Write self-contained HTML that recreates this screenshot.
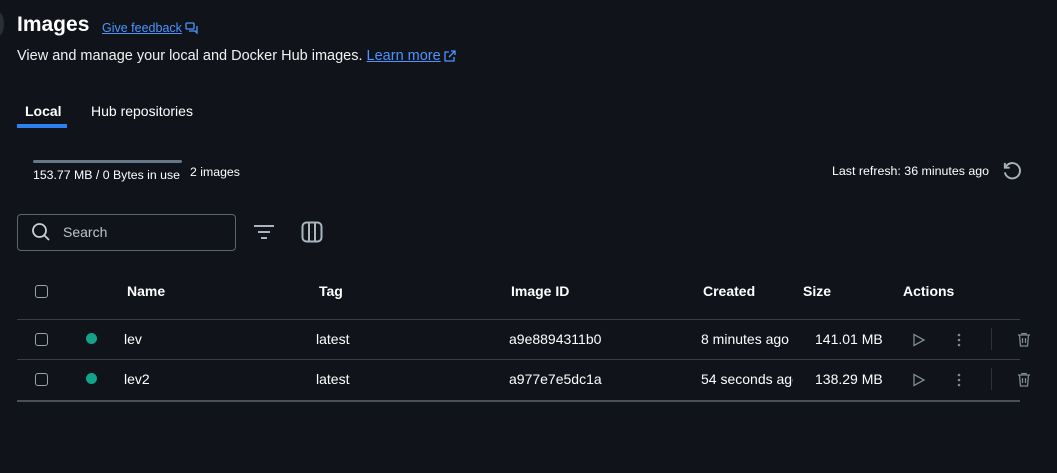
<!DOCTYPE html>
<html><head><meta charset="utf-8"><style>
*{margin:0;padding:0;box-sizing:border-box}
body{width:1057px;height:473px;background:#10131a;font-family:"Liberation Sans",sans-serif;color:#fff;position:relative;overflow:hidden}
.a{position:absolute;white-space:nowrap}
.link{color:#4d94ff;text-decoration:underline}
.hd{font-weight:bold;font-size:14px;color:#fff}
.cell{font-size:14px;color:#fff}
.cb{position:absolute;width:13px;height:13px;border:1.5px solid #9aa3ad;border-radius:3px}
.dot{position:absolute;width:11px;height:11px;border-radius:50%;background:#13a38a}
.line{position:absolute;left:17px;width:1003px;height:1px;background:#3a3f47}
</style></head><body>
<div class="a" style="left:-8px;top:12px;width:12px;height:24px;border-radius:50%;background:#2a2e36"></div>
<div class="a" style="left:17px;top:13px;font-size:21px;font-weight:bold">Images</div>
<div class="a link" style="left:102px;top:21px;font-size:12.5px">Give feedback</div>
<svg class="a" style="left:185px;top:22px" width="13" height="12" viewBox="0 0 13 12" fill="none" stroke="#4d94ff" stroke-width="1.3"><rect x="1" y="1" width="8" height="6" rx="1"/><path d="M4 9h6l2 2V4"/></svg>
<div class="a" style="left:17px;top:48px;font-size:14.5px;color:#f2f2f2">View and manage your local and Docker Hub images. <span class="link">Learn more</span></div>
<svg class="a" style="left:443px;top:50px" width="13" height="13" viewBox="0 0 13 13" fill="none" stroke="#4d94ff" stroke-width="1.3"><path d="M6 2H2v9h9V7M8 1h4v4M12 1 6 7"/></svg>
<div class="a" style="left:25px;top:103px;font-size:14px;font-weight:bold">Local</div>
<div class="a" style="left:17px;top:124px;width:50px;height:4px;background:#2e7ff0"></div>
<div class="a" style="left:91px;top:103px;font-size:14px">Hub repositories</div>
<div class="a" style="left:33px;top:160px;width:149px;height:3px;background:#66778a;border-radius:2px"></div>
<div class="a" style="left:33px;top:168px;font-size:12.3px">153.77 MB / 0 Bytes in use</div>
<div class="a" style="left:190px;top:165px;font-size:12.3px">2 images</div>
<div class="a" style="left:832px;top:164px;font-size:12.4px">Last refresh: 36 minutes ago</div>
<svg class="a" style="left:1001px;top:160px" width="23" height="23" viewBox="0 0 24 24" fill="none" stroke="#a9b4bf" stroke-width="2"><path d="M5 7a8 8 0 1 1-1 6"/><path d="M4 3v5h5"/></svg>
<div class="a" style="left:17px;top:214px;width:219px;height:37px;border:1px solid #5c6670;border-radius:4px"></div>
<svg class="a" style="left:31px;top:222px" width="20" height="20" viewBox="0 0 20 20" fill="none" stroke="#c9d0d6" stroke-width="1.8"><circle cx="8.5" cy="8.5" r="6.5"/><path d="M13.5 13.5 18 18"/></svg>
<div class="a" style="left:63px;top:224px;font-size:14px;color:#b9c3cc">Search</div>
<svg class="a" style="left:253px;top:224px" width="22" height="16" viewBox="0 0 22 16" stroke="#a9b4bf" stroke-width="2"><path d="M1 2h20M5 8h12M8 14h6"/></svg>
<svg class="a" style="left:301px;top:221px" width="22" height="22" viewBox="0 0 22 22" fill="none" stroke="#a9b4bf" stroke-width="2"><rect x="1.5" y="1.5" width="19" height="19" rx="4"/><path d="M8 2v18M14 2v18"/></svg>
<div class="cb" style="left:35px;top:285px"></div>
<div class="a hd" style="left:127px;top:283px">Name</div>
<div class="a hd" style="left:319px;top:283px">Tag</div>
<div class="a hd" style="left:511px;top:283px">Image ID</div>
<div class="a hd" style="left:703px;top:283px">Created</div>
<div class="a hd" style="left:803px;top:283px">Size</div>
<div class="a hd" style="left:903px;top:283px">Actions</div>
<div class="line" style="top:319px"></div>
<div class="cb" style="left:35px;top:333px"></div>
<div class="dot" style="left:86px;top:333px"></div>
<div class="a cell" style="left:124px;top:331px">lev</div>
<div class="a cell" style="left:316px;top:331px">latest</div>
<div class="a cell" style="left:509px;top:331px">a9e8894311b0</div>
<div class="a cell" style="left:701px;top:331px">8 minutes ago</div>
<div class="a cell" style="left:815px;top:331px">141.01 MB</div>
<div class="line" style="top:359px"></div>
<div class="cb" style="left:35px;top:373px"></div>
<div class="dot" style="left:86px;top:373px"></div>
<div class="a cell" style="left:124px;top:371px">lev2</div>
<div class="a cell" style="left:316px;top:371px">latest</div>
<div class="a cell" style="left:509px;top:371px">a977e7e5dc1a</div>
<div class="a cell" style="left:701px;top:371px;width:92px;overflow:hidden">54 seconds ago</div>
<div class="a cell" style="left:815px;top:371px">138.29 MB</div>
<div class="line" style="top:400px;height:2px;background:#4a5058"></div>
<svg class="a" style="left:912px;top:333px" width="14" height="14" viewBox="0 0 14 14" fill="none" stroke="#7f8a95" stroke-width="1.3"><path d="M2 1.5v11l10-5.5z"/></svg>
<svg class="a" style="left:956px;top:333px" width="6" height="14" viewBox="0 0 6 14" fill="#7f8a95"><circle cx="3" cy="2" r="1.3"/><circle cx="3" cy="7" r="1.3"/><circle cx="3" cy="12" r="1.3"/></svg>
<div class="a" style="left:991px;top:328px;width:1px;height:22px;background:#2e333a"></div>
<svg class="a" style="left:1017px;top:332px" width="14" height="15" viewBox="0 0 14 15" fill="none" stroke="#7f8a95" stroke-width="1.3"><path d="M1 3h12M5 3V1.5h4V3M2.5 3l1 11h7l1-11M5.5 6v5M8.5 6v5"/></svg>
<svg class="a" style="left:912px;top:373px" width="14" height="14" viewBox="0 0 14 14" fill="none" stroke="#7f8a95" stroke-width="1.3"><path d="M2 1.5v11l10-5.5z"/></svg>
<svg class="a" style="left:956px;top:373px" width="6" height="14" viewBox="0 0 6 14" fill="#7f8a95"><circle cx="3" cy="2" r="1.3"/><circle cx="3" cy="7" r="1.3"/><circle cx="3" cy="12" r="1.3"/></svg>
<div class="a" style="left:991px;top:368px;width:1px;height:22px;background:#2e333a"></div>
<svg class="a" style="left:1017px;top:372px" width="14" height="15" viewBox="0 0 14 15" fill="none" stroke="#7f8a95" stroke-width="1.3"><path d="M1 3h12M5 3V1.5h4V3M2.5 3l1 11h7l1-11M5.5 6v5M8.5 6v5"/></svg>
</body></html>
